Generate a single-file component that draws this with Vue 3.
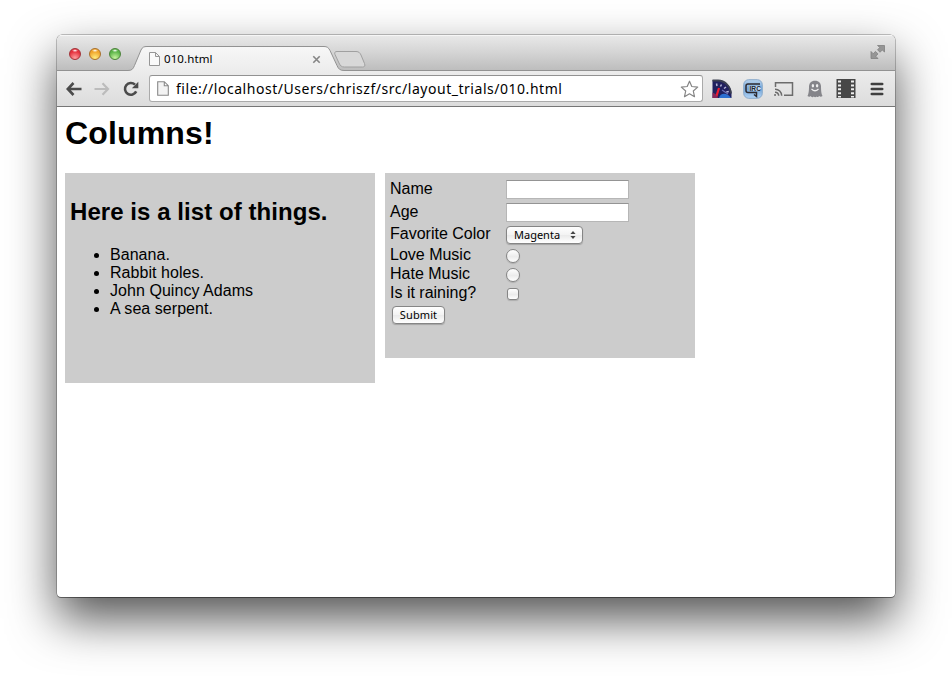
<script setup>
import { ref } from 'vue'

const things = ['Banana.', 'Rabbit holes.', 'John Quincy Adams', 'A sea serpent.']
const lights = ['red', 'amber', 'green']
const name = ref('')
const age = ref('')
</script>

<template>
  <div class="desktop">
    <div class="window">
      <header class="tabstrip">
        <svg class="tab-shape" width="838" height="36" viewBox="0 0 838 36">
          <defs>
            <linearGradient id="tabfill" x1="0" y1="0" x2="0" y2="1">
              <stop offset="0" stop-color="#f7f7f7" />
              <stop offset="1" stop-color="#ececec" />
            </linearGradient>
          </defs>
          <path d="M0 35.500H71C75 35.500 76 34 77.500 30.500L84 15C85.500 12 87 11.500 90 11.500H267C270 11.500 271.500 12.500 273 15.500L280 30.500C281.500 34 283 35.500 287 35.500H838V37H0Z" fill="url(#tabfill)" stroke="#929292" />
          <path d="M280 16.500H299C302 16.500 303 18 304 20L307.500 28.500C308.500 31 307.500 32 305.500 32H287.500C284.500 32 283.500 31 282 28L278 19.500C277.200 17.500 278 16.500 280 16.500Z" fill="#d8d8d8" stroke="#a0a0a0" />
        </svg>
        <div class="lights">
          <span v-for="c in lights" :key="c" class="light" :class="c"></span>
        </div>
        <div class="tab">
          <svg width="11" height="14" viewBox="0 0 11 14" class="doc">
            <path d="M.5.5h6l4 4v9H.5zM6.500.5v4h4" fill="#fafafa" stroke="#969696" />
          </svg>
          <span class="tab-title">010.html</span>
          <svg width="9" height="9" viewBox="0 0 9 9"><path d="M1.300 1.300l6.400 6.400M7.700 1.300L1.300 7.700" stroke="#858585" stroke-width="1.600" /></svg>
        </div>
        <svg class="expand" width="16" height="16" viewBox="0 0 16 16" fill="#969696" stroke="#808080" stroke-width=".8">
          <path d="M7.500 1.500h7v6.500l-2.200-2-2.300 2.300-2.500-2.500 2.300-2.300z" />
          <path d="M8 14.500H1v-7l2.200 2.200 2.300-2.300L8 9.900l-2.300 2.300z" />
        </svg>
      </header>

      <nav class="toolbar">
        <svg class="nav-icon" width="16" height="14" viewBox="0 0 16 14" fill="none" stroke="#4b4b4b" stroke-width="2.600"><path d="M15.500 7H2.500M7.500 1L1.800 7l5.700 6" /></svg>
        <svg class="nav-icon fwd" width="16" height="14" viewBox="0 0 16 14" fill="none" stroke="#bcbcbc" stroke-width="2.200"><path d="M.5 7h13M8.500 1.300L14 7l-5.500 5.700" /></svg>
        <svg class="nav-icon reload" width="16" height="16" viewBox="0 0 16 16"><path d="M13.200 10.400A5.900 5.900 0 1 1 12 3.600" fill="none" stroke="#4b4b4b" stroke-width="2.600" /><path d="M15.300.8v6.400H8.900z" fill="#4b4b4b" /></svg>
        <div class="omnibox">
          <svg width="12" height="15" viewBox="0 0 12 15"><path d="M.7.7h6.600l4 4v9.600H.7zM7.300.7v4h4" fill="#f3f3f3" stroke="#888" stroke-width="1.100" /></svg>
          <span class="url">file://localhost/Users/chriszf/src/layout_trials/010.html</span>
          <svg width="19" height="18" viewBox="0 0 19 18"><path d="M9.500 1.200l2.300 5.300 5.900.6-4.400 3.900 1.200 5.700-5-2.900-5 2.900 1.200-5.700-4.400-3.900 5.900-.6z" fill="#fff" stroke="#858585" stroke-width="1.200" stroke-linejoin="round" /></svg>
        </div>
        <div class="extensions">
          <svg width="20" height="20" viewBox="0 0 20 20">
            <path d="M.5 1H6c7 0 13 6 13.500 13v5H.5z" fill="#20205e" />
            <path d="M.5 1.500H6c7 0 12.500 6 13 13" fill="none" stroke="#3c4050" stroke-width="1.800" />
            <path d="M4.500 4.500l.5 2.500M9.500 5.500L8.500 7.500M14 8l-2 1.500M16.800 12.500l-2.500.5" stroke="#b6b7d8" stroke-width="1.500" />
            <path d="M7 19c1-5 8-6 12 0z" fill="#2c6fd0" />
            <path d="M10 11l6 4" stroke="#6d70b8" stroke-width="1.200" />
            <path d="M4 18.500L7 9" stroke="#f01b30" stroke-width="2.200" />
            <path d="M.5 13.500l3 1.500 2.500 4H.5z" fill="#86285a" />
          </svg>
          <svg width="20" height="20" viewBox="0 0 20 20">
            <defs><linearGradient id="irc" x1="0" y1="0" x2="0" y2="1"><stop offset="0" stop-color="#b8d3ef" /><stop offset=".5" stop-color="#75a6d8" /><stop offset="1" stop-color="#b3d4f5" /></linearGradient></defs>
            <rect x=".7" y=".7" width="18.600" height="18.600" rx="5" fill="url(#irc)" stroke="#89a9ca" />
            <path d="M17 5H5Q3 5 3 7v4.500q0 2 2 2h8.500V17.500L11 15.500" fill="none" stroke="#2d2a30" stroke-width="1.500" />
            <path d="M6.500 7h11.500v4.800H6.500z" fill="#c4dbf2" />
            <text x="6.500" y="11.700" font-size="6.500" font-weight="700" textLength="11.500" lengthAdjust="spacingAndGlyphs" fill="#1d2732">IRC</text>
          </svg>
          <svg width="20" height="16" viewBox="0 0 20 16" fill="none" stroke="#6c6c6c" stroke-width="1.500">
            <path d="M1.500 6V1.700h17v12.600H10" />
            <path d="M1 8.200a6.500 6.500 0 0 1 6.700 6.500M1 11.200a3.500 3.500 0 0 1 3.700 3.500" /><path d="M.3 14h1.500" stroke-width="2" />
          </svg>
          <svg width="16" height="18" viewBox="0 0 16 18">
            <path d="M8 .7c-4 0-6 2.600-6 6 0 4-.3 7-1.500 9.300 1.500 1 2.500.8 3.300 0 .8 1.500 2.200 1.500 3 .4.800 1.100 1.900 1.100 2.600 0 .8 1 2 1 2.800-.4 1 .9 2 .9 3.300 0C14.300 13.700 14 10.700 14 6.700c0-3.400-2-6-6-6z" fill="#85858a" />
            <ellipse cx="5.900" cy="5.800" rx="1.200" ry="1.700" fill="#eee" /><ellipse cx="10.100" cy="5.800" rx="1.200" ry="1.700" fill="#eee" />
            <path d="M4.500 9q3.500 3.500 7 0" stroke="#eee" stroke-width="1.200" fill="none" />
          </svg>
          <svg width="20" height="19" viewBox="0 0 20 19">
            <path d="M.5 0h19v19H.5z" fill="#474747" />
            <path d="M3.500 1.500v17M16.500 1.500v17" stroke="#ededed" stroke-width="3" stroke-dasharray="2 1.900" />
          </svg>
          <svg width="14" height="14" viewBox="0 0 14 14" stroke="#3f3f3f" stroke-width="2.600" stroke-linecap="round"><path d="M1.800 2h10.400M1.800 7h10.400M1.800 12h10.400" /></svg>
        </div>
      </nav>

      <main class="page">
        <h1>Columns!</h1>
        <div class="columns">
          <section class="column list">
            <h2>Here is a list of things.</h2>
            <ul>
              <li v-for="t in things" :key="t">{{ t }}</li>
            </ul>
          </section>
          <form class="column form" @submit.prevent>
            <div class="fields">
              <label>Name</label><input v-model="name" class="text" type="text" />
              <label>Age</label><input v-model="age" class="text" type="text" />
              <label>Favorite Color</label>
              <button type="button" class="control select">
                <span>Magenta</span>
                <svg width="6" height="8" viewBox="0 0 6 8" fill="#444"><path d="M3 0l2.600 3H.4zM3 8l2.600-3H.4z" /></svg>
              </button>
              <label class="compact">Love Music</label><input class="radio" type="radio" name="love" />
              <label class="compact">Hate Music</label><input class="radio" type="radio" name="hate" />
              <label class="compact">Is it raining?</label><input class="check" type="checkbox" />
            </div>
            <button class="control submit">Submit</button>
          </form>
        </div>
      </main>
    </div>
  </div>
</template>

<style>
body { background: #fff; overflow: hidden; }
</style>

<style scoped>
.desktop {
  box-sizing: border-box;
  width: 952px;
  height: 676px;
  padding: 35px 57px 79px;
  overflow: hidden;
  font-family: "Liberation Sans", sans-serif;
  color: #000;
}
.window {
  width: 838px;
  height: 562px;
  border-radius: 5px 5px 4px 4px;
  background: #fff;
  box-shadow: 0 0 0 .5px rgba(0, 0, 0, .45), 0 1px 0 rgba(0, 0, 0, .3), 0 22px 48px rgba(0, 0, 0, .68);
  overflow: hidden;
}
svg { display: block; flex: none; }
.tabstrip {
  position: relative;
  display: flex;
  align-items: center;
  height: 36px;
  background: linear-gradient(#e9e9e9, #d6d6d6 45%, #bcbcbc);
  box-shadow: inset 0 1px #f6f6f6;
}
.tab-shape { position: absolute; left: 0; top: 0; }
.lights { display: flex; gap: 8px; padding: 2px 0 0 12px; }
.light {
  box-sizing: border-box;
  width: 12px;
  height: 12px;
  border-radius: 50%;
  border: 1px solid;
}
.red { border-color: #a33238; background: radial-gradient(ellipse 3px 1.500px at 50% 16%, #fff, transparent), radial-gradient(circle at 50% 90%, #ffa0a0, #e5303c 65%); }
.amber { border-color: #a9702a; background: radial-gradient(ellipse 3px 1.500px at 50% 16%, #fff, transparent), radial-gradient(circle at 50% 90%, #ffee80, #f0a42a 65%); }
.green { border-color: #4b8339; background: radial-gradient(ellipse 3px 1.500px at 50% 16%, #fff, transparent), radial-gradient(circle at 50% 90%, #c8f5a0, #5bb448 65%); }
.tab {
  position: relative;
  display: flex;
  align-items: center;
  width: 172px;
  margin-left: 28px;
  padding-top: 12px;
}
.tab-title {
  flex: 1;
  padding-left: 4px;
  font: 11.500px/14px "Noto Sans", sans-serif;
  letter-spacing: .1px;
}
.expand { position: relative; margin: 0 9px 2px auto; }
.toolbar {
  box-sizing: border-box;
  display: flex;
  align-items: center;
  height: 36px;
  padding-left: 9px;
  background: linear-gradient(#ececec, #dcdcdc);
  border-bottom: 1px solid #767676;
}
.fwd { margin-left: 12px; }
.reload { margin-left: 13px; }
.omnibox {
  box-sizing: border-box;
  display: flex;
  align-items: center;
  width: 554px;
  height: 27px;
  margin-left: 10px;
  padding: 0 3px 0 7px;
  border: 1px solid #aaa;
  border-top-color: #929292;
  border-radius: 3px;
  background: #fff;
}
.url {
  flex: 1;
  padding-left: 7px;
  font: 14px/18px "Noto Sans", sans-serif;
  letter-spacing: .53px;
  white-space: nowrap;
}
.extensions {
  display: grid;
  grid-template-columns: repeat(6, 31px);
  align-items: center;
  justify-items: center;
  margin-left: 3px;
}
.page { padding: 8px; }
h1 { margin: 0 0 21px; font-size: 32px; line-height: 37px; letter-spacing: .15px; }
.columns { display: flex; align-items: flex-start; gap: 10px; }
.column { box-sizing: border-box; width: 310px; padding: 5px; background: #ccc; }
.list { height: 210px; }
.form { height: 185px; }
h2 { margin: 20px 0 21px; font-size: 24px; line-height: 27px; letter-spacing: .06px; }
ul { margin: 0; padding-left: 40px; font-size: 16px; line-height: 18px; letter-spacing: .05px; }
.fields {
  display: grid;
  grid-template-columns: 116px 1fr;
  grid-template-rows: 23px 22px 23px 19px 19px 19px;
  font-size: 16px;
  line-height: 22px;
}
.compact { line-height: 18px; }
input { appearance: none; box-sizing: border-box; margin: 0; }
.text {
  width: 123px;
  height: 19px;
  margin-top: 2px;
  border: 1px solid #b6b6b6;
  border-top-color: #949494;
  background: #fff;
}
.control {
  box-sizing: border-box;
  display: flex;
  align-items: center;
  height: 18px;
  margin: 0;
  border: 1px solid #858585;
  border-radius: 4px;
  background: linear-gradient(#fff, #f3f3f3 50%, #eaeaea 51%, #fff);
  box-shadow: 0 1px 1px rgba(0, 0, 0, .2);
  font: 11px/14px "Noto Sans", sans-serif;
  color: #000;
}
.select { width: 77px; margin-top: 3px; padding: 0 6px 0 7px; justify-content: space-between; }
.submit { width: 53px; margin: 3px 0 0 2px; padding: 0; justify-content: center; letter-spacing: .1px; }
.radio, .check {
  border: 1px solid #858585;
  background: linear-gradient(#fff, #ececec 55%, #fff);
  box-shadow: 0 1px 1px rgba(0, 0, 0, .15);
}
.radio { width: 14px; height: 14px; margin-top: 3px; border-radius: 50%; }
.check { width: 12px; height: 12px; margin: 4px 0 0 1px; border-radius: 3px; }
</style>
